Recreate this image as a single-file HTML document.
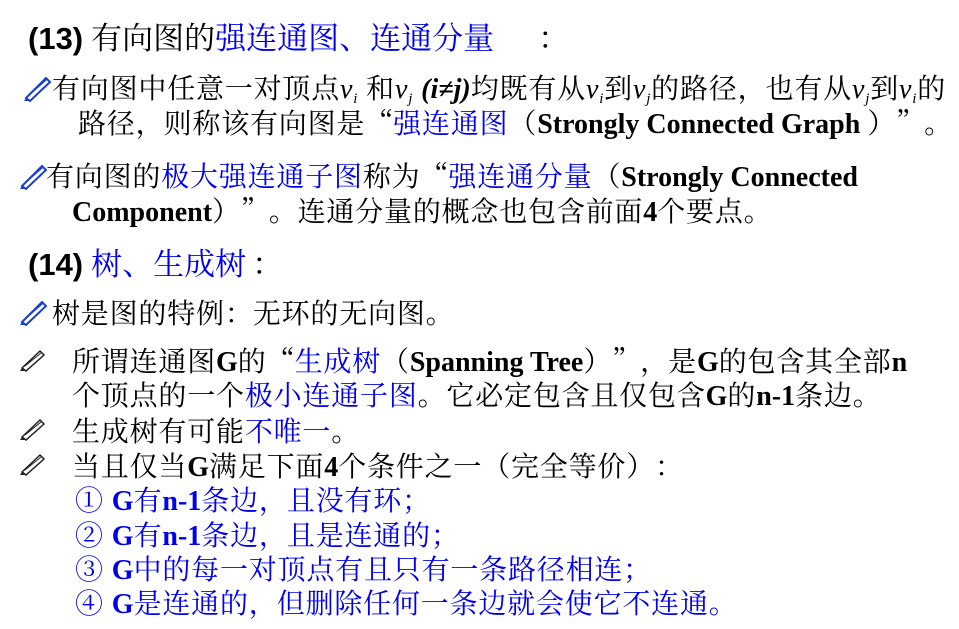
<!DOCTYPE html>
<html><head><meta charset="utf-8"><style>
body{margin:0;width:959px;height:629px;background:#fff;position:relative;overflow:hidden;font-family:"Noto Serif CJK SC",serif;color:#000}
.l{position:absolute;white-space:nowrap;font-size:28px;line-height:34px;letter-spacing:0.8px}
.b{color:#0000ee}
.t{font-size:31px;line-height:40px;letter-spacing:0}
.t .n{font-family:"Liberation Sans",sans-serif;font-weight:bold}
.e{font-weight:bold;font-family:"Liberation Serif",serif;letter-spacing:0}
i{font-style:italic;font-family:"Liberation Serif",serif}
sub{font-size:15px;font-style:italic;vertical-align:-5px;line-height:0;font-family:"Liberation Serif",serif}
.p{display:inline-block;width:1em;text-align:left}
.q{display:inline-block;width:1em;text-align:right}
svg{position:absolute}
</style></head><body>
<div class="l t" style="left:28px;top:16px"><span class="n">(13)</span> 有向图的<span class="b">强连通图、连通分量</span><span class="p" style="margin-left:44px">：</span></div>

<svg style="left:22px;top:74px" width="30" height="28" viewBox="0 0 30 28"><path d="M4 24 L24 4 L28 8 L8 27 Z" fill="#fff" stroke="#1a3fd0" stroke-width="2"/><path d="M4 24 L2 27 L8 27" fill="#1a3fd0"/><path d="M7 21 L25 5" stroke="#1a3fd0" stroke-width="1.5"/></svg>
<div class="l" style="left:52px;top:70px">有向图中任意一对顶点<i>v</i><sub>i</sub> 和<i>v</i><sub>j</sub> <i class="e">(i≠j)</i>均既有从<i>v</i><sub>i</sub>到<i>v</i><sub>j</sub>的路径<span class="p">，</span>也有从<i>v</i><sub>j</sub>到<i>v</i><sub>i</sub>的</div>
<div class="l" style="left:78px;top:105px">路径<span class="p">，</span>则称该有向图是<span class="q">“</span><span class="b">强连通图</span>（<span class="e">Strongly Connected Graph </span>）<span class="p">”</span>。</div>

<svg style="left:18px;top:162px" width="30" height="28" viewBox="0 0 30 28"><path d="M4 24 L24 4 L28 8 L8 27 Z" fill="#fff" stroke="#1a3fd0" stroke-width="2"/><path d="M4 24 L2 27 L8 27" fill="#1a3fd0"/><path d="M7 21 L25 5" stroke="#1a3fd0" stroke-width="1.5"/></svg>
<div class="l" style="left:46px;top:158px">有向图的<span class="b">极大强连通子图</span>称为<span class="q">“</span><span class="b">强连通分量</span>（<span class="e">Strongly Connected</span></div>
<div class="l" style="left:72px;top:193px"><span class="e">Component</span>）<span class="p">”</span>。连通分量的概念也包含前面<span class="e">4</span>个要点。</div>

<div class="l t" style="left:28px;top:242px"><span class="n">(14)</span> <span class="b">树、生成树</span><span class="p" style="margin-left:6px">：</span></div>

<svg style="left:18px;top:298px" width="30" height="28" viewBox="0 0 30 28"><path d="M4 24 L24 4 L28 8 L8 27 Z" fill="#fff" stroke="#1a3fd0" stroke-width="2"/><path d="M4 24 L2 27 L8 27" fill="#1a3fd0"/><path d="M7 21 L25 5" stroke="#1a3fd0" stroke-width="1.5"/></svg>
<div class="l" style="left:52px;top:295px">树是图的特例<span class="p">：</span>无环的无向图。</div>

<svg style="left:18px;top:348px" width="28" height="24" viewBox="0 0 28 24"><path d="M4 20 L22 3 L26 7 L8 23 Z" fill="#fff" stroke="#222" stroke-width="1.5"/><path d="M4 20 L2 23 L8 23" fill="#222"/><path d="M7 18 L23 5" stroke="#222" stroke-width="1"/></svg>
<div class="l" style="left:72px;top:343px">所谓连通图<span class="e">G</span>的<span class="q">“</span><span class="b">生成树</span>（<span class="e">Spanning Tree</span>）<span class="p">”</span><span class="p">，</span>是<span class="e">G</span>的包含其全部<span class="e">n</span></div>
<div class="l" style="left:72px;top:377px">个顶点的一个<span class="b">极小连通子图</span>。它必定包含且仅包含<span class="e">G</span>的<span class="e">n-1</span>条边。</div>
<svg style="left:18px;top:417px" width="28" height="24" viewBox="0 0 28 24"><path d="M4 20 L22 3 L26 7 L8 23 Z" fill="#fff" stroke="#222" stroke-width="1.5"/><path d="M4 20 L2 23 L8 23" fill="#222"/><path d="M7 18 L23 5" stroke="#222" stroke-width="1"/></svg>
<div class="l" style="left:72px;top:413px">生成树有可能<span class="b">不唯一</span>。</div>
<svg style="left:18px;top:452px" width="28" height="24" viewBox="0 0 28 24"><path d="M4 20 L22 3 L26 7 L8 23 Z" fill="#fff" stroke="#222" stroke-width="1.5"/><path d="M4 20 L2 23 L8 23" fill="#222"/><path d="M7 18 L23 5" stroke="#222" stroke-width="1"/></svg>
<div class="l" style="left:72px;top:448px">当且仅当<span class="e">G</span>满足下面<span class="e">4</span>个条件之一（完全等价）<span class="p">：</span></div>
<div class="l b" style="left:75px;top:482px">① <span class="e">G</span>有<span class="e">n-1</span>条边<span class="p">，</span>且没有环<span class="p">；</span></div>
<div class="l b" style="left:75px;top:517px">② <span class="e">G</span>有<span class="e">n-1</span>条边<span class="p">，</span>且是连通的<span class="p">；</span></div>
<div class="l b" style="left:75px;top:551px">③ <span class="e">G</span>中的每一对顶点有且只有一条路径相连<span class="p">；</span></div>
<div class="l b" style="left:75px;top:585px">④ <span class="e">G</span>是连通的<span class="p">，</span>但删除任何一条边就会使它不连通。</div>
</body></html>
